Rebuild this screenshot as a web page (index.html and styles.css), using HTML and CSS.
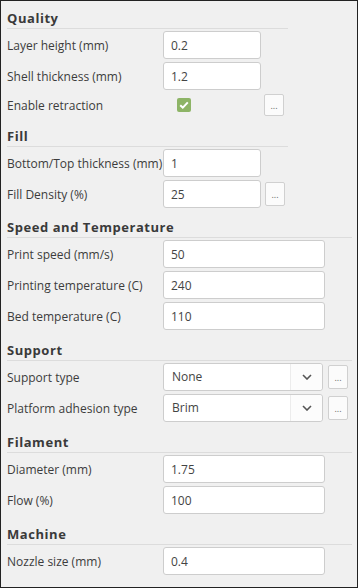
FILE: index.html
```html
<!DOCTYPE html>
<html>
<head>
  <meta charset="UTF-8">
  <title>Print settings</title>
  <link rel="stylesheet" href="styles.css">
</head>
<body>
  <div class="panel">
    <section class="group narrow">
      <h3>Quality</h3>
      <div class="row"><label>Layer height (mm)</label><input class="field short" value="0.2"></div>
      <div class="row"><label>Shell thickness (mm)</label><input class="field short" value="1.2"></div>
      <div class="row check-row">
        <label>Enable retraction</label>
        <span class="check-cell">
          <span class="checkbox">
            <svg width="10" height="8" viewBox="0 0 10 8"><path d="M1.2 4.2 L3.8 6.6 L8.8 1.4" fill="none" stroke="#fff" stroke-width="2"/></svg>
          </span>
        </span>
        <button class="more">...</button>
      </div>
    </section>

    <section class="group narrow">
      <h3>Fill</h3>
      <div class="row"><label>Bottom/Top thickness (mm)</label><input class="field short" value="1"></div>
      <div class="row"><label>Fill Density (%)</label><input class="field short" value="25"><button class="more">...</button></div>
    </section>

    <section class="group speed">
      <h3>Speed and Temperature</h3>
      <div class="row"><label>Print speed (mm/s)</label><input class="field" value="50"></div>
      <div class="row"><label>Printing temperature (C)</label><input class="field" value="240"></div>
      <div class="row"><label>Bed temperature (C)</label><input class="field" value="110"></div>
    </section>

    <section class="group">
      <h3>Support</h3>
      <div class="row">
        <label>Support type</label>
        <div class="select"><span class="select-value">None</span><span class="select-arrow"><svg width="10" height="6" viewBox="0 0 10 6"><path d="M1 1 L5 5 L9 1" fill="none" stroke="#555" stroke-width="1.6"/></svg></span></div>
        <button class="more wide-more">...</button>
      </div>
      <div class="row">
        <label>Platform adhesion type</label>
        <div class="select"><span class="select-value">Brim</span><span class="select-arrow"><svg width="10" height="6" viewBox="0 0 10 6"><path d="M1 1 L5 5 L9 1" fill="none" stroke="#555" stroke-width="1.6"/></svg></span></div>
        <button class="more wide-more">...</button>
      </div>
    </section>

    <section class="group">
      <h3>Filament</h3>
      <div class="row"><label>Diameter (mm)</label><input class="field" value="1.75"></div>
      <div class="row"><label>Flow (%)</label><input class="field" value="100"></div>
    </section>

    <section class="group">
      <h3>Machine</h3>
      <div class="row"><label>Nozzle size (mm)</label><input class="field" value="0.4"></div>
    </section>
  </div>
</body>
</html>
```

FILE: styles.css
```css
html, body { margin: 0; padding: 0; }
body { font-family: "Open Sans", "Noto Sans", sans-serif; background: #f0f0f0; }

.panel { box-sizing: border-box; width: 358px; height: 588px; border: 1px solid #222; background: #f0f0f0; padding: 9px 5px 0 6px; }

.group { margin-top: 12px; }
.group:first-child { margin-top: 0; }
.group.narrow { width: 281px; }
.group.narrow + .group.narrow, .group.speed { margin-top: 11px; }

.group h3 { margin: 0 0 2px; font-size: 13px; line-height: 16px; font-weight: 700; color: #3a3a3a; padding-bottom: 2px; border-bottom: 1px solid #dcdcdc; letter-spacing: 0.55px; }

.row { display: flex; align-items: center; height: 28px; margin-top: 3px; }
.group h3 + .row { margin-top: 0; }
.row label { width: 156px; flex: none; font-size: 12px; color: #3c3c3c; white-space: nowrap; }

.field { box-sizing: border-box; width: 162px; height: 28px; border: 1px solid #cdcdcd; border-radius: 3px; background: #fff; padding: 0 7px; font-family: inherit; font-size: 12px; color: #444; outline: none; }
.field.short { width: 98px; }

.check-row { height: 24px; }
.check-cell { width: 101px; flex: none; display: flex; padding-left: 14px; box-sizing: border-box; }
.checkbox { width: 14px; height: 14px; border-radius: 2px; background: #8db466; display: flex; align-items: center; justify-content: center; }

.more { box-sizing: border-box; width: 20px; height: 24px; margin-left: 4px; padding: 0; border: 1px solid #d0d0d0; border-radius: 2px; background: #fbfbfb; color: #666; font-family: inherit; font-size: 9px; line-height: 1; }
.check-row .more { height: 22px; margin-left: 0; }
.wide-more { margin-left: 5px; }

.select { box-sizing: border-box; width: 160px; height: 28px; display: flex; border: 1px solid #cdcdcd; border-radius: 3px; background: #fff; }
.select-value { flex: 1; padding-left: 8px; font-size: 12px; color: #444; line-height: 26px; }
.select-arrow { width: 31px; border-left: 1px solid #ececec; background: #fcfcfc; border-radius: 0 3px 3px 0; display: flex; align-items: center; justify-content: center; }
```
